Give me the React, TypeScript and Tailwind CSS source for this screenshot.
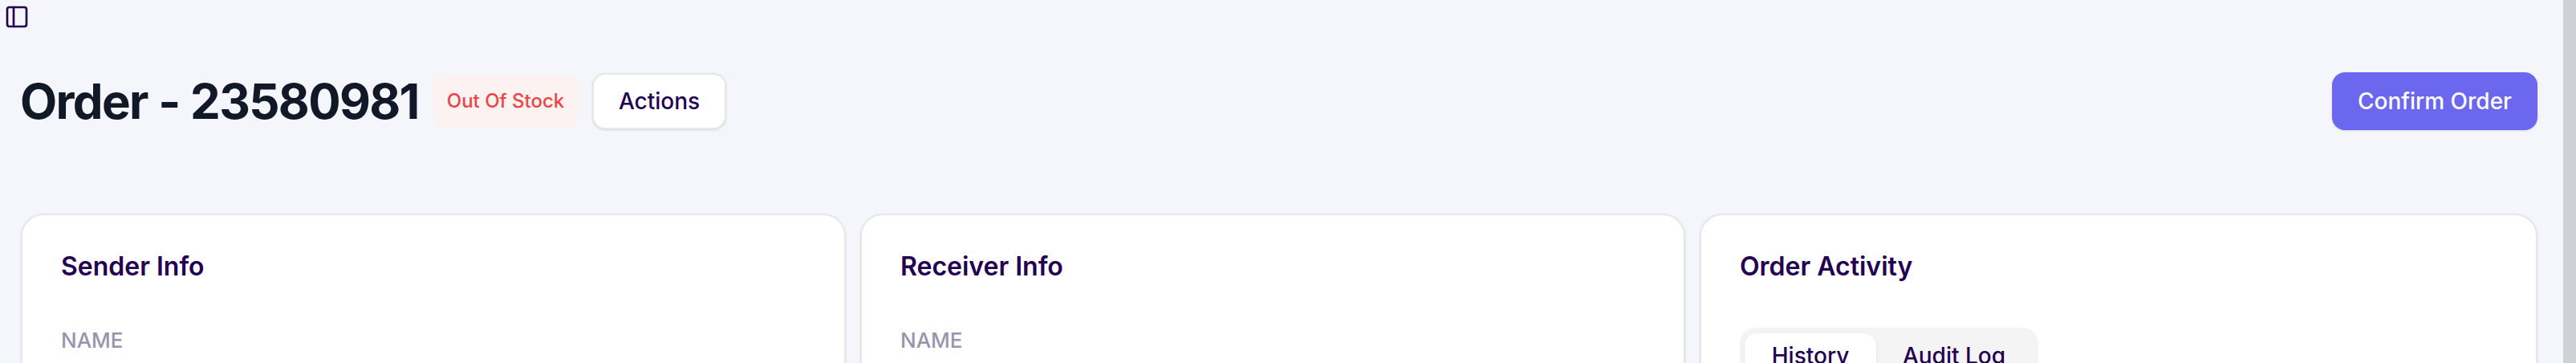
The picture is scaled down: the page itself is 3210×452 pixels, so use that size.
import { PanelLeft } from 'lucide-react';

function InfoCard({ title }: { title: string }) {
  return (
    <div className="w-[1028px] h-[500px] shrink-0 rounded-[28px] border-2 border-[#e5e7eb] bg-white px-12 pt-10 shadow-sm">
      <h2 className="text-[32px] leading-[48px] font-semibold text-[#230051]">{title}</h2>
      <p className="mt-[52px] text-[26px] leading-[32px] font-medium text-[#9a94ab]">NAME</p>
    </div>
  );
}

export default function App() {
  return (
    <div className="flex h-screen overflow-hidden bg-[#f5f6fb] font-['Inter',sans-serif]">
      <main className="flex-1 min-w-0">
        <div className="pl-[5px] pt-[5px]">
          <PanelLeft className="w-8 h-8 text-[#230051]" />
        </div>

        {/* header */}
        <div className="flex items-center justify-between pl-[25px] pr-8 mt-[53px]">
          <div className="flex items-center">
            <h1 className="w-[498px] text-[60px] leading-[72px] font-bold text-[#111827] tracking-[-1.7px] [word-spacing:1px] whitespace-nowrap">Order - 23580981</h1>
            <span className="ml-4 flex h-[67px] w-[182px] items-center justify-center rounded-2xl bg-[#fdf2f2] text-2xl font-medium text-[#ef4444]">
              Out Of Stock
            </span>
            <button className="ml-[17px] h-[70px] w-[167px] rounded-2xl border-2 border-[#e5e7eb] bg-white text-[28px] font-medium text-[#230051] shadow-sm">
              Actions
            </button>
          </div>
          <button className="h-[72px] w-[256px] rounded-2xl bg-[#6c67ef] text-[28px] font-medium text-white shadow-sm">
            Confirm Order
          </button>
        </div>

        {/* cards */}
        <div className="flex gap-[18px] pl-[26px] pr-8 mt-[104px]">
          <InfoCard title="Sender Info" />
          <InfoCard title="Receiver Info" />
          <div className="flex-1 min-w-0 h-[500px] rounded-[28px] border-2 border-[#e5e7eb] bg-white px-12 pt-10 shadow-sm">
            <h2 className="text-[32px] leading-[48px] font-semibold text-[#230051]">Order Activity</h2>
            <div className="mt-[52px] flex h-[100px] w-[372px] rounded-[20px] bg-[#f4f4f5] px-[6px] pt-[7px]">
              <button className="h-14 w-[164px] rounded-2xl bg-white text-[28px] font-medium text-[#230051] shadow-sm">History</button>
              <button className="h-14 w-[194px] text-[28px] font-medium text-[#230051]">Audit Log</button>
            </div>
          </div>
        </div>
      </main>

      {/* scrollbar */}
      <div className="w-4 shrink-0 bg-[#d0d1d5]" />
    </div>
  );
}
